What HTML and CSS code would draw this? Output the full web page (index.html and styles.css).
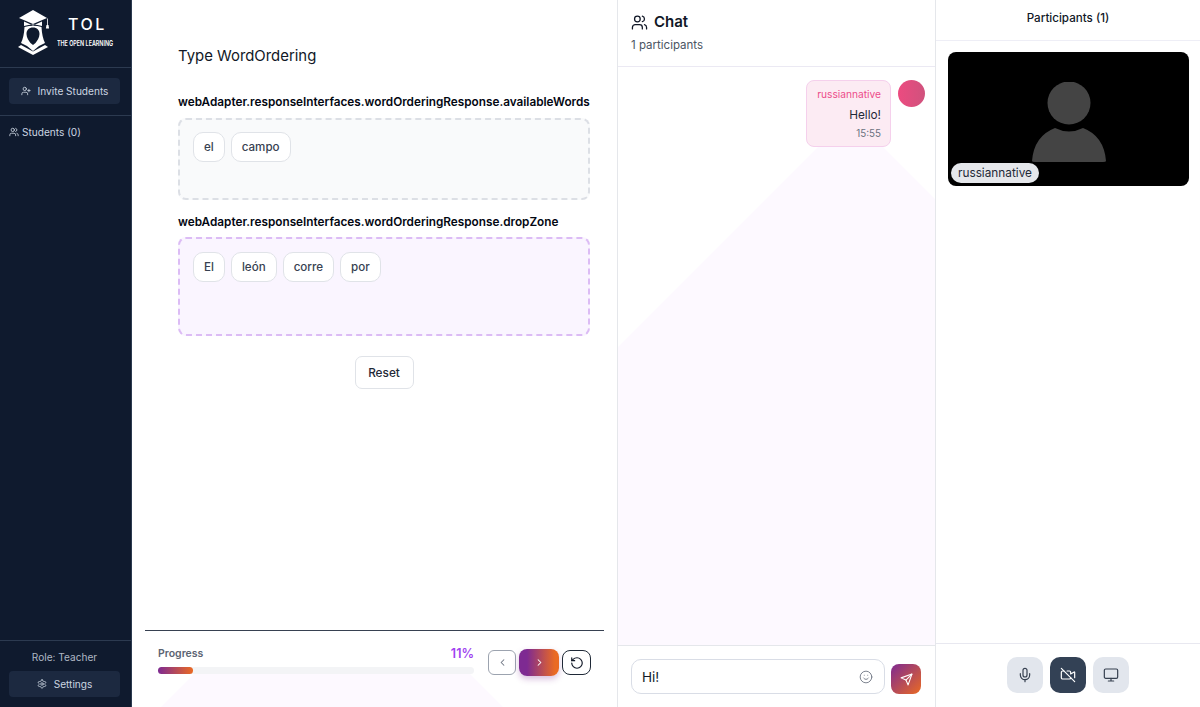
FILE: index.html
```html
<!DOCTYPE html>
<html lang="en">
<head>
    <meta charset="UTF-8">
    <title>TOL - The Open Learning</title>
    <link rel="stylesheet" href="styles.css">
</head>
<body>

<div class="app">
    <aside class="sidebar">
        <div class="brand">
            <svg class="brand-logo" viewBox="0 0 34 46" fill="#fff">
                <polygon points="15,1 1,9 15,15 29,9"/>
                <path d="M6 12.500v4.500q9-3 18 0v-4.500l-9 4z"/>
                <path d="M29 9.500h.8v7h-.8z"/>
                <path d="M28.500 16h2l.6 3.500h-3.200z"/>
                <path d="M6.500 18q-.5 10-3.500 16l6 3 6 5 6-5 6-3q-3-6-3.500-16q-8-2.500-17 0z"/>
                <path d="M15 18.500c-4 0-6.500 2.500-6.500 6.500 0 4 2.500 7 4 9l2.500 2 2.500-2c1.500-2 4-5 4-9 0-4-2.500-6.500-6.500-6.500z" fill="#0f1a2e"/>
                <path d="M0 38l15 8 15-8-3-2-12 6.500L3 36z"/>
            </svg>
            <div class="brand-text">
                <div class="brand-name">TOL</div>
                <div class="brand-sub">THE OPEN LEARNING</div>
            </div>
        </div>
        <div class="side-action">
            <button class="side-btn">
                <svg class="icon" viewBox="0 0 24 24"><path d="M16 21v-2a4 4 0 0 0-4-4H6a4 4 0 0 0-4 4v2"/><circle cx="9" cy="7" r="4"/><path d="M19 8v6M22 11h-6"/></svg>
                Invite Students
            </button>
        </div>
        <div class="side-students">
            <svg class="icon" viewBox="0 0 24 24"><path d="M16 21v-2a4 4 0 0 0-4-4H6a4 4 0 0 0-4 4v2"/><circle cx="9" cy="7" r="4"/><path d="M22 21v-2a4 4 0 0 0-3-3.870"/><path d="M16 3.130a4 4 0 0 1 0 7.750"/></svg>
            Students (0)
        </div>
        <div class="side-bottom">
            <div class="role">Role: Teacher</div>
            <button class="side-btn">
                <svg class="icon" viewBox="0 0 24 24"><path d="M12.220 2h-.44a2 2 0 0 0-2 2v.18a2 2 0 0 1-1 1.730l-.43.25a2 2 0 0 1-2 0l-.15-.08a2 2 0 0 0-2.730.73l-.22.38a2 2 0 0 0 .73 2.730l.15.1a2 2 0 0 1 1 1.720v.51a2 2 0 0 1-1 1.740l-.15.09a2 2 0 0 0-.73 2.730l.22.38a2 2 0 0 0 2.730.73l.15-.08a2 2 0 0 1 2 0l.43.25a2 2 0 0 1 1 1.730V20a2 2 0 0 0 2 2h.44a2 2 0 0 0 2-2v-.18a2 2 0 0 1 1-1.730l.43-.25a2 2 0 0 1 2 0l.15.08a2 2 0 0 0 2.730-.73l.22-.39a2 2 0 0 0-.73-2.730l-.15-.08a2 2 0 0 1-1-1.740v-.5a2 2 0 0 1 1-1.740l.15-.09a2 2 0 0 0 .73-2.730l-.22-.38a2 2 0 0 0-2.730-.73l-.15.08a2 2 0 0 1-2 0l-.43-.25a2 2 0 0 1-1-1.730V4a2 2 0 0 0-2-2z"/><circle cx="12" cy="12" r="3"/></svg>
                Settings
            </button>
        </div>
    </aside>

    <main class="lesson">
        <div class="exercise">
            <h1>Type WordOrdering</h1>
            <h2>webAdapter.responseInterfaces.wordOrderingResponse.availableWords</h2>
            <div class="word-box">
                <span class="chip">el</span>
                <span class="chip">campo</span>
            </div>
            <h2>webAdapter.responseInterfaces.wordOrderingResponse.dropZone</h2>
            <div class="word-box drop">
                <span class="chip">El</span>
                <span class="chip">león</span>
                <span class="chip">corre</span>
                <span class="chip">por</span>
            </div>
            <button class="reset">Reset</button>
        </div>
        <div class="lesson-foot">
            <div class="progress">
                <div class="progress-row">
                    <span class="progress-label">Progress</span>
                    <span class="progress-value">11%</span>
                </div>
                <div class="progress-track"><div class="progress-fill" style="width: 11%"></div></div>
            </div>
            <div class="nav">
                <button class="nav-btn prev"><svg class="icon" viewBox="0 0 24 24"><path d="m15 18-6-6 6-6"/></svg></button>
                <button class="nav-btn next"><svg class="icon" viewBox="0 0 24 24"><path d="m9 18 6-6-6-6"/></svg></button>
                <button class="nav-btn redo"><svg class="icon" viewBox="0 0 24 24"><path d="M3 12a9 9 0 1 0 9-9 9.750 9.750 0 0 0-6.740 2.740L3 8"/><path d="M3 3v5h5"/></svg></button>
            </div>
        </div>
    </main>

    <section class="chat">
        <header class="chat-head">
            <div class="chat-title">
                <svg class="icon" viewBox="0 0 24 24"><path d="M16 21v-2a4 4 0 0 0-4-4H6a4 4 0 0 0-4 4v2"/><circle cx="9" cy="7" r="4"/><path d="M22 21v-2a4 4 0 0 0-3-3.870"/><path d="M16 3.130a4 4 0 0 1 0 7.750"/></svg>
                Chat
            </div>
            <div class="chat-count">1 participants</div>
        </header>
        <div class="chat-log">
            <div class="message">
                <div class="bubble">
                    <div class="sender">russiannative</div>
                    <div class="text">Hello!</div>
                    <div class="time">15:55</div>
                </div>
                <div class="avatar"></div>
            </div>
        </div>
        <div class="chat-input">
            <div class="input-box">
                <span>Hi!</span>
                <svg class="icon" viewBox="0 0 24 24"><circle cx="12" cy="12" r="10"/><path d="M8 14s1.500 2 4 2 4-2 4-2"/><path d="M9 9h.01M15 9h.01"/></svg>
            </div>
            <button class="send"><svg class="icon" viewBox="0 0 24 24"><path d="m22 2-7 20-4-9-9-4Z"/><path d="M22 2 11 13"/></svg></button>
        </div>
    </section>

    <section class="people">
        <header class="people-head">Participants (1)</header>
        <div class="people-list">
            <div class="tile">
                <svg class="tile-person" viewBox="0 0 74 81" fill="#444">
                    <circle cx="37" cy="21" r="21.500"/>
                    <path d="M23 46q14 7 28 0q21 8 23 33q0 1-3 1H3q-3 0-3-1q2-25 23-33z"/>
                </svg>
                <span class="tile-name">russiannative</span>
            </div>
        </div>
        <div class="controls">
            <button class="ctrl"><svg class="icon" viewBox="0 0 24 24"><path d="M12 2a3 3 0 0 0-3 3v7a3 3 0 0 0 6 0V5a3 3 0 0 0-3-3Z"/><path d="M19 10v2a7 7 0 0 1-14 0v-2"/><path d="M12 19v3"/></svg></button>
            <button class="ctrl off"><svg class="icon" viewBox="0 0 24 24"><path d="M10.660 6H14a2 2 0 0 1 2 2v2.500l5.248-3.062A.5.5 0 0 1 22 7.870v8.196"/><path d="M16 16a2 2 0 0 1-2 2H4a2 2 0 0 1-2-2V8a2 2 0 0 1 2-2h2"/><path d="m2 2 20 20"/></svg></button>
            <button class="ctrl"><svg class="icon" viewBox="0 0 24 24"><rect x="2" y="3" width="20" height="14" rx="2"/><path d="M8 21h8M12 17v4"/></svg></button>
        </div>
    </section>
</div>

</body>
</html>
```

FILE: styles.css
```css
* {
    box-sizing: border-box;
}
body {
    margin: 0;
    font-family: 'Inter', 'Liberation Sans', sans-serif;
    color: #111827;
    background: #fff;
}
button {
    font-family: inherit;
    cursor: pointer;
}
.icon {
    fill: none;
    stroke: currentColor;
    stroke-width: 2;
    stroke-linecap: round;
    stroke-linejoin: round;
    flex: none;
}
.app {
    display: flex;
    height: 100vh;
    overflow: hidden;
}

/* sidebar */
.sidebar {
    width: 132px;
    flex: none;
    display: flex;
    flex-direction: column;
    background: #0f1a2e;
    border-right: 1px solid #2c3a50;
    color: #cbd5e1;
    font-size: 10.100px;
}
.brand {
    height: 68px;
    padding: 9px 0 0 18px;
    display: flex;
    border-bottom: 1px solid #2c3a50;
}
.brand-logo {
    width: 34px;
    height: 46px;
    flex: none;
}
.brand-text {
    margin-left: 5px;
    color: #fff;
}
.brand-name {
    font-size: 16px;
    font-weight: 500;
    letter-spacing: 2.500px;
    margin: 5px 0 0 11px;
    line-height: 20px;
}
.brand-sub {
    font-size: 7.500px;
    font-weight: 600;
    line-height: 10px;
    margin-top: 5px;
    white-space: nowrap;
    transform: scaleX(0.72);
    transform-origin: left center;
}
.side-action {
    height: 48px;
    padding: 10px 11px 10px 9px;
    border-bottom: 1px solid #2c3a50;
}
.side-btn {
    width: 100%;
    height: 26px;
    display: flex;
    align-items: center;
    justify-content: center;
    gap: 7px;
    border: 0;
    border-radius: 4px;
    background: #1c2940;
    color: #cbd5e1;
    font-size: 10.100px;
}
.side-btn .icon {
    width: 10px;
    height: 10px;
}
.side-students {
    display: flex;
    align-items: center;
    gap: 3px;
    padding: 9px 9px;
    line-height: 14px;
}
.side-students .icon {
    width: 10px;
    height: 10px;
}
.side-bottom {
    margin-top: auto;
    height: 67px;
    padding: 9px 11px 0 9px;
    border-top: 1px solid #2c3a50;
    text-align: center;
}
.role {
    line-height: 14px;
    margin-bottom: 7px;
    color: #aeb7c4;
}

/* exercise */
.lesson {
    width: 486px;
    flex: none;
    display: flex;
    flex-direction: column;
    border-right: 1px solid #e5e7eb;
}
.exercise {
    flex: 1;
    padding: 47px 27px 0 46px;
    display: flex;
    flex-direction: column;
}
h1 {
    margin: 0 0 28px;
    font-size: 14.900px;
    font-weight: 400;
    line-height: 19px;
    color: #111827;
}
h2 {
    margin: 0 0 8px;
    font-size: 11.780px;
    font-weight: 600;
    line-height: 16px;
    color: #030712;
    white-space: nowrap;
}
.word-box {
    height: 82px;
    margin-bottom: 14px;
    padding: 12px 13px;
    display: flex;
    align-items: flex-start;
    gap: 6px;
    border: 2px dashed #dcdfe5;
    border-radius: 8px;
    background: #f9fafb;
}
.word-box.drop {
    height: 99px;
    margin-top: -1px;
    padding-top: 13px;
    border-color: #dcbcf5;
    background: #faf5ff;
    margin-bottom: 20px;
}
.chip {
    height: 30px;
    padding: 0 10px;
    display: flex;
    align-items: center;
    border: 1px solid #e0e3e8;
    border-radius: 10px;
    background: #fff;
    font-size: 11.600px;
    font-weight: 500;
    color: #374151;
}
.reset {
    align-self: center;
    width: 59px;
    height: 33px;
    border: 1px solid #e0e3e8;
    border-radius: 7px;
    background: #fff;
    font-size: 11.800px;
    font-weight: 500;
    color: #1f2937;
}
.lesson-foot {
    position: relative;
    height: 77px;
    margin: 0 13px;
    padding: 12px 13px 0;
    display: flex;
    gap: 14px;
    border-top: 1px solid #374151;
}
.lesson-foot::after {
    content: "";
    position: absolute;
    left: 0;
    right: 0;
    bottom: 0;
    height: 33px;
    background: #fdf9ff;
    clip-path: polygon(49px 0, 325px 0, 358px 33px, 16px 33px);
}
.progress {
    width: 317px;
    position: relative;
    z-index: 1;
}
.progress-row {
    display: flex;
    justify-content: space-between;
    align-items: center;
    height: 20px;
}
.progress-label {
    font-size: 10.500px;
    font-weight: 600;
    color: #5b6372;
}
.progress-value {
    font-size: 12.500px;
    font-weight: 600;
    color: #a044f0;
}
.progress-track {
    height: 7px;
    margin-top: 4px;
    border-radius: 4px;
    background: #f3f4f6;
}
.progress-fill {
    height: 100%;
    border-radius: 4px;
    background: linear-gradient(90deg, #7e2a92, #ea6a23);
}
.nav {
    position: relative;
    z-index: 1;
    display: flex;
    align-items: center;
    gap: 3px;
    height: 27px;
    margin-top: 6px;
}
.nav-btn {
    height: 25px;
    width: 28px;
    padding: 0;
    display: flex;
    align-items: center;
    justify-content: center;
    background: #fff;
    border: 1px solid #9ca3af;
    border-radius: 6px;
    color: #6b7280;
}
.nav-btn .icon {
    width: 11px;
    height: 11px;
    stroke-width: 2.200;
}
.nav-btn.next {
    height: 27px;
    width: 40px;
    border: 0;
    border-radius: 8px;
    background: linear-gradient(90deg, #7e2a92 20%, #ea6a23 90%);
    color: #fff;
    box-shadow: 0 3px 6px rgba(126, 42, 146, 0.3);
}
.nav-btn.redo {
    width: 29px;
    border-color: #1f2937;
    border-radius: 8px;
    color: #111827;
}
.nav-btn.redo .icon {
    width: 14px;
    height: 14px;
    stroke-width: 2;
}

/* chat */
.chat {
    width: 318px;
    flex: none;
    display: flex;
    flex-direction: column;
    border-right: 1px solid #e5e7eb;
}
.chat-head {
    height: 67px;
    padding: 12px 13px 0;
    border-bottom: 1px solid #ebe9f3;
}
.chat-title {
    display: flex;
    align-items: center;
    gap: 6px;
    font-size: 15px;
    font-weight: 600;
    line-height: 20px;
    color: #111827;
}
.chat-title .icon {
    width: 17px;
    height: 17px;
    stroke-width: 1.800;
}
.chat-count {
    margin-top: 5px;
    font-size: 11.500px;
    line-height: 16px;
    color: #4b5563;
}
.chat-log {
    flex: 1;
    position: relative;
    padding: 13px 10px 0;
}
.chat-log::before {
    content: "";
    position: absolute;
    inset: 0;
    background: #fdf9ff;
    clip-path: polygon(0 280px, 200px 80px, 265px 80px, 318px 133px, 318px 100%, 0 100%);
}
.message {
    position: relative;
    display: flex;
    justify-content: flex-end;
    gap: 7px;
}
.bubble {
    width: 85px;
    height: 67px;
    padding: 7px 9px;
    text-align: right;
    border: 1px solid #f5d0ec;
    border-radius: 8px;
    background: #fcebf3;
}
.sender {
    font-size: 10.200px;
    line-height: 13px;
    color: #ec4c8a;
}
.text {
    margin-top: 7px;
    font-size: 11.800px;
    line-height: 15px;
    color: #1f2937;
}
.time {
    margin-top: 4px;
    font-size: 9.800px;
    line-height: 13px;
    color: #6b7280;
}
.avatar {
    width: 27px;
    height: 27px;
    border-radius: 50%;
    background: linear-gradient(90deg, #ec4b80, #d0527d);
}
.chat-input {
    height: 62px;
    padding: 13px 14px 13px 13px;
    display: flex;
    gap: 6px;
    align-items: flex-end;
    border-top: 1px solid #e5e7eb;
    background: #fff;
}
.input-box {
    flex: 1;
    height: 35px;
    padding: 0 11px 0 10px;
    display: flex;
    align-items: center;
    justify-content: space-between;
    border: 1px solid #d9dde6;
    border-radius: 10px;
    font-size: 13.500px;
    color: #111827;
}
.input-box .icon {
    width: 14px;
    height: 14px;
    stroke-width: 1.500;
    color: #6b7280;
}
.send {
    width: 30px;
    height: 30px;
    padding: 0;
    display: flex;
    align-items: center;
    justify-content: center;
    border: 0;
    border-radius: 8px;
    background: linear-gradient(135deg, #7e2a92, #ea6a23);
    color: #fff;
}
.send .icon {
    width: 13px;
    height: 13px;
}

/* participants */
.people {
    flex: 1;
    display: flex;
    flex-direction: column;
}
.people-head {
    height: 41px;
    padding-top: 11px;
    text-align: center;
    font-size: 11.600px;
    font-weight: 500;
    line-height: 15px;
    color: #111827;
    border-bottom: 1px solid #eeeef6;
}
.people-list {
    flex: 1;
    padding: 11px 11px 0 12px;
}
.tile {
    position: relative;
    height: 134px;
    display: flex;
    justify-content: center;
    padding-top: 30px;
    border-radius: 8px;
    background: #000;
}
.tile-person {
    width: 74px;
    height: 81px;
}
.tile-name {
    position: absolute;
    left: 3px;
    bottom: 3px;
    height: 20px;
    padding: 0 7px;
    display: flex;
    align-items: center;
    border-radius: 10px;
    background: #e5e7eb;
    font-size: 11.800px;
    color: #1f2937;
}
.controls {
    height: 64px;
    padding-top: 13px;
    display: flex;
    justify-content: center;
    gap: 7px;
    border-top: 1px solid #e8e8f0;
}
.ctrl {
    width: 36px;
    height: 36px;
    padding: 0;
    display: flex;
    align-items: center;
    justify-content: center;
    border: 0;
    border-radius: 10px;
    background: #e2e6ed;
    color: #374151;
}
.ctrl .icon {
    width: 16px;
    height: 16px;
    stroke-width: 1.800;
}
.ctrl.off {
    background: #334155;
    color: #fff;
}
```
